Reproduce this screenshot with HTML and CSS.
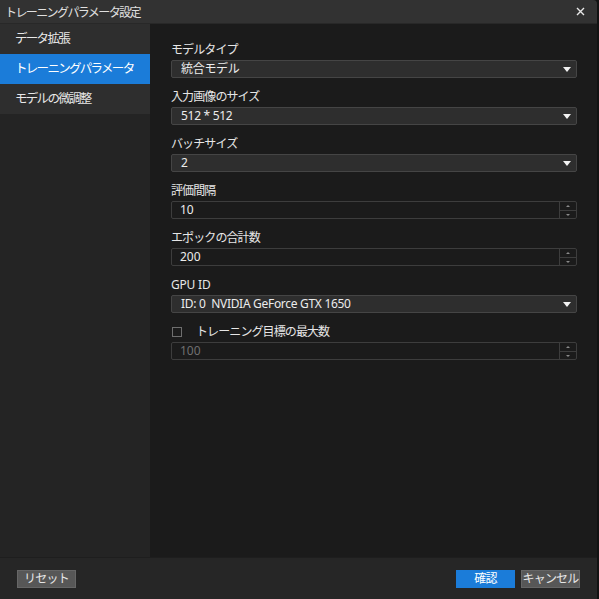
FILE: index.html
```html
<!DOCTYPE html>
<html lang="ja">
<head>
    <meta charset="UTF-8">
    <meta name="viewport" content="width=device-width, initial-scale=1.0">
    <title>トレーニングパラメータ設定</title>
    <link rel="stylesheet" href="styles.css">
</head>
<body>
    <div class="window">
        <div class="titlebar">
            <span class="title">トレーニングパラメータ設定</span>
            <span class="close">
                <svg width="9" height="9" viewBox="0 0 9 9"><path d="M1 1L8 8M8 1L1 8" stroke="#e8e8e8" stroke-width="1.4"/></svg>
            </span>
        </div>

        <div class="main">
            <div class="sidebar">
                <div class="nav-item">データ拡張</div>
                <div class="nav-item active">トレーニングパラメータ</div>
                <div class="nav-item">モデルの微調整</div>
            </div>

            <div class="content">
                <div class="field">
                    <label>モデルタイプ</label>
                    <div class="select">統合モデル<span class="arrow"></span></div>
                </div>
                <div class="field">
                    <label>入力画像のサイズ</label>
                    <div class="select">512 * 512<span class="arrow"></span></div>
                </div>
                <div class="field">
                    <label>バッチサイズ</label>
                    <div class="select">2<span class="arrow"></span></div>
                </div>
                <div class="field">
                    <label>評価間隔</label>
                    <div class="spin">
                        <span class="value">10</span>
                        <div class="spin-btns"><span class="up"></span><span class="down"></span></div>
                    </div>
                </div>
                <div class="field">
                    <label>エポックの合計数</label>
                    <div class="spin">
                        <span class="value">200</span>
                        <div class="spin-btns"><span class="up"></span><span class="down"></span></div>
                    </div>
                </div>
                <div class="field">
                    <label class="latin">GPU ID</label>
                    <div class="select">ID: 0&nbsp; NVIDIA GeForce GTX 1650<span class="arrow"></span></div>
                </div>
                <div class="field">
                    <label class="check"><span class="box"></span>トレーニング目標の最大数</label>
                    <div class="spin disabled">
                        <span class="value">100</span>
                        <div class="spin-btns"><span class="up"></span><span class="down"></span></div>
                    </div>
                </div>
            </div>
        </div>

        <div class="footer">
            <button class="btn">リセット</button>
            <div class="footer-right">
                <button class="btn primary">確認</button>
                <button class="btn">キャンセル</button>
            </div>
        </div>
    </div>
</body>
</html>
```

FILE: styles.css
```css
* {
    margin: 0;
    padding: 0;
    box-sizing: border-box;
    font-family: "Noto Sans", "Noto Sans CJK JP", sans-serif;
}

body {
    background-color: #121212;
    width: 599px;
    height: 599px;
    overflow: hidden;
}

.window {
    width: 597px;
    height: 599px;
    display: flex;
    flex-direction: column;
    background: #1b1b1b;
    border-top-right-radius: 4px;
    overflow: hidden;
}

.titlebar {
    height: 24px;
    background: #323232;
    border-bottom: 1px solid #282828;
    display: flex;
    align-items: center;
    justify-content: space-between;
    padding: 0 12px 0 5px;
}

.title {
    color: #e0e0e0;
    font-size: 12px;
    letter-spacing: -1.6px;
}

.close {
    display: flex;
}

.main {
    flex: 1;
    display: flex;
}

.sidebar {
    width: 150px;
    background: #242424;
}

.nav-item {
    height: 30px;
    line-height: 30px;
    padding-left: 15px;
    background: #2e2e2e;
    color: #e8e8e8;
    font-size: 12.5px;
    letter-spacing: -1.7px;
}

.nav-item.active {
    background: #1b7cd9;
    color: #ffffff;
}

.content {
    flex: 1;
    padding: 17px 20px 0 21px;
}

.field {
    margin-bottom: 10px;
}

.field label {
    display: block;
    height: 17px;
    line-height: 17px;
    margin-bottom: 2px;
    color: #e6e6e6;
    font-size: 12px;
    letter-spacing: -0.9px;
}

.field label.latin {
    letter-spacing: -0.2px;
}

.select {
    position: relative;
    height: 18px;
    line-height: 16px;
    padding-left: 9px;
    background: #2e2e2e;
    border: 1px solid #454545;
    border-radius: 2px;
    color: #ececec;
    font-size: 12px;
    letter-spacing: -0.3px;
}

.select .arrow {
    position: absolute;
    right: 5px;
    top: 6px;
    width: 0;
    height: 0;
    border-left: 4px solid transparent;
    border-right: 4px solid transparent;
    border-top: 5px solid #f2f2f2;
}

.spin {
    height: 18px;
    display: flex;
    background: #1b1b1b;
    border: 1px solid #3d3d3d;
    border-radius: 2px;
}

.spin .value {
    flex: 1;
    line-height: 16px;
    padding-left: 8px;
    color: #ececec;
    font-size: 12px;
}

.spin.disabled .value {
    color: #707070;
}

.spin-btns {
    width: 17px;
    border-left: 1px solid #3d3d3d;
    display: flex;
    flex-direction: column;
}

.spin-btns span {
    flex: 1;
    position: relative;
}

.spin-btns .up {
    border-bottom: 1px solid #3d3d3d;
}

.spin-btns span::after {
    content: "";
    position: absolute;
    left: 6px;
    top: 3px;
    border-left: 2px solid transparent;
    border-right: 2px solid transparent;
}

.spin-btns .up::after {
    border-bottom: 2px solid #8a8a8a;
}

.spin-btns .down::after {
    border-top: 2px solid #8a8a8a;
}

.check {
    display: flex !important;
    align-items: center;
}

.check .box {
    width: 10px;
    height: 10px;
    border: 1px solid #6e6e6e;
    margin: 0 14px 0 1px;
}

.footer {
    height: 42px;
    background: #262626;
    border-top: 1px solid #1e1e1e;
    display: flex;
    align-items: center;
    justify-content: space-between;
    padding: 0 17px;
}

.footer-right {
    display: flex;
    gap: 6px;
}

.btn {
    width: 59px;
    height: 18px;
    padding: 0;
    background: #575757;
    border: 1px solid #666;
    color: #e6e6e6;
    font-size: 12px;
    letter-spacing: -0.8px;
    line-height: 15px;
    white-space: nowrap;
}

.btn.primary {
    background: #1b7cd9;
    border-color: #1b7cd9;
    color: #fff;
}
```
